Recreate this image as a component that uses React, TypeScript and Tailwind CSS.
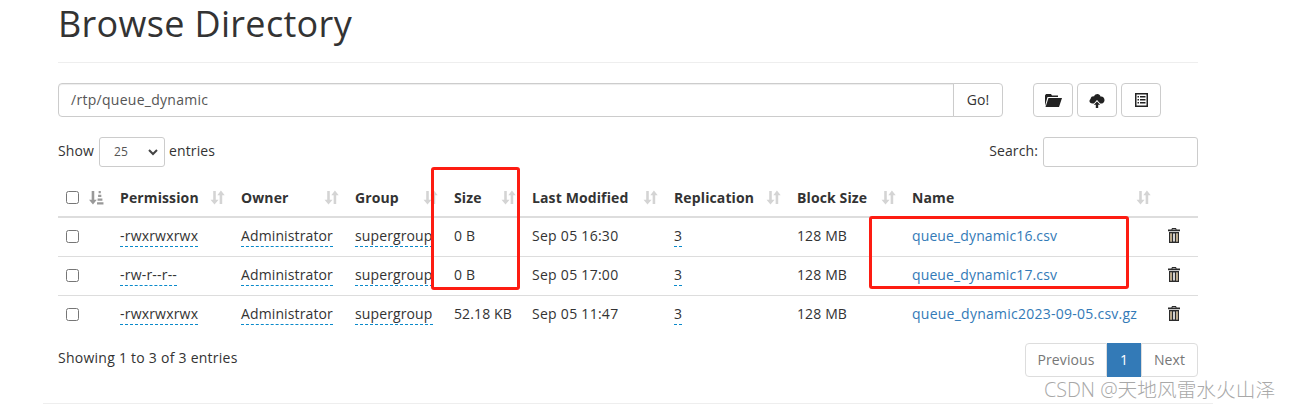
const font = { fontFamily: '"Open Sans", "Noto Sans CJK SC", sans-serif' };

const columns = [
  { label: "Permission", width: "w-[121px]" },
  { label: "Owner", width: "w-[114px]" },
  { label: "Group", width: "w-[99px]" },
  { label: "Size", width: "w-[78px]" },
  { label: "Last Modified", width: "w-[142px]" },
  { label: "Replication", width: "w-[123px]" },
  { label: "Block Size", width: "w-[115px]" },
  { label: "Name", width: "w-[255px]" },
];

const files = [
  { perm: "-rwxrwxrwx", size: "0 B", date: "Sep 05 16:30", name: "queue_dynamic16.csv" },
  { perm: "-rw-r--r--", size: "0 B", date: "Sep 05 17:00", name: "queue_dynamic17.csv" },
  { perm: "-rwxrwxrwx", size: "52.18 KB", date: "Sep 05 11:47", name: "queue_dynamic2023-09-05.csv.gz" },
];

function SortIcon() {
  return (
    <svg width="15" height="15" viewBox="0 0 14 14" className="text-[#d4d4d4]" fill="currentColor">
      <path d="M3 1h2.400v8H8l-3.800 4.500L.5 9H3z" />
      <path d="M9 13V5H6.800L10.200.5 13.700 5H11.400v8z" />
    </svg>
  );
}

function SortActiveIcon() {
  return (
    <svg width="15" height="15" viewBox="0 0 14 14" className="text-[#999]" fill="currentColor">
      <path d="M2.500 1h2.400v8h2.400l-3.600 4.500L0 9h2.500z" />
      <path d="M9 1h2v2H9zM8.500 4.500h3v2h-3zM8 8h4.500v2H8zM7.500 11.500h6v2h-6z" />
    </svg>
  );
}

function TrashIcon() {
  return (
    <svg width="14" height="15" viewBox="0 0 14 15" fill="#2b2b2b">
      <path d="M5 0h4l.6 1.600H13v1.600H1V1.600h3.400zM5.600.9l-.2.700h3.200l-.2-.7z" />
      <path fillRule="evenodd" d="M2 4h10v11H2zM3.300 5.500v8h1.500v-8zM6.200 5.500v8h1.600v-8zM9.200 5.500v8h1.500v-8z" />
      <path d="M3.300 5.500h1.500v8H3.300zM9.200 5.500h1.500v8H9.200z" fill="#b9a27a" />
    </svg>
  );
}

function Checkbox() {
  return <span className="block h-[13px] w-[13px] rounded-[2.500px] border border-[#767676] bg-white" />;
}

function Dotted({ children }: { children: string }) {
  return <span className="border-b border-dashed border-[#0a8acb] pb-px">{children}</span>;
}

export default function App() {
  return (
    <div className="relative h-[409px] w-[1291px] overflow-hidden bg-white text-[14px] tracking-[0.12px] text-[#333]" style={font}>
      <div className="ml-[43px] w-[1170px] border-b border-[#eee] px-[15px] pb-[26px]">
        <div className="h-[63px] border-b border-[#eee]">
          <h1 className="text-[36px] leading-[48px] tracking-[0.32px] text-[#333]">Browse Directory</h1>
        </div>

        <div className="mt-5 flex h-[34px] items-center">
          <div className="flex h-[34px] w-[945px]">
            <div className="flex flex-1 items-center rounded-l border border-[#ccc] px-3 pb-[2px] tracking-[0.28px] text-[#555] shadow-[inset_0_1px_1px_rgba(0,0,0,0.075)]">
              /rtp/queue_dynamic
            </div>
            <div className="-ml-px flex w-[50px] items-center justify-center rounded-r border border-[#ccc] pb-[2px]">Go!</div>
          </div>
          <div className="ml-[30px] flex gap-1">
            <div className="flex h-[34px] w-10 items-center justify-center rounded border border-[#ccc]">
              <svg width="18" height="13" viewBox="0 0 18 13" fill="#222">
                <path d="M2 0h5l1 1.500h6V3H3.500L1 12V1.500z" />
                <path d="M4.500 4H18l-3 9H1.500z" />
              </svg>
            </div>
            <div className="flex h-[34px] w-10 items-center justify-center rounded border border-[#ccc]">
              <svg width="16" height="15" viewBox="0 0 16 15" fill="#222">
                <path d="M5 10.500H3.500C.5 10.500-.5 7.500 1.500 6 2 3.500 4 3 5 3.500 6.500 0 11 .5 11.500 3.500c3-.5 5 2.500 3.500 5.500-.4.800-1.500 1.500-2.500 1.500H11L8 7z" />
                <path d="M8 7.500l4.500 4.800H9.800V15H6.200v-2.700H3.500z" fill="#fff" />
                <path d="M8 8.500l3.200 3.300H9.200V15H6.800v-3.200H4.800z" />
              </svg>
            </div>
            <div className="flex h-[34px] w-10 items-center justify-center rounded border border-[#ccc]">
              <svg width="13" height="14" viewBox="0 0 13 14" fill="#222">
                <path fillRule="evenodd" d="M0 0h13v14H0zM1.500 1.500v11h10v-11z" />
                <path d="M2.500 3h1.500v1.500H2.500zM5 3h5.500v1.500H5zM2.500 6h1.500v1.500H2.500zM5 6h5.500v1.500H5zM2.500 9h1.500v1.500H2.500zM5 9h5.500v1.500H5z" />
              </svg>
            </div>
          </div>
        </div>

        <div className="mt-5 flex h-[30px] items-center justify-between">
          <div className="flex items-center">
            <span className="pb-1">Show</span>
            <div className="mr-1 ml-[5px] flex h-[30px] w-[66px] items-center justify-between rounded-[3px] border border-[#ccc] pr-[6px] pl-[14px] text-[12px] text-[#555]">
              25
              <svg width="10" height="7" viewBox="0 0 10 7" fill="none" stroke="#444" strokeWidth="2">
                <path d="M1 1l4 4 4-4" />
              </svg>
            </div>
            <span className="pb-1">entries</span>
          </div>
          <div className="flex items-center">
            <span className="pb-1">Search:</span>
            <div className="ml-[5px] h-[30px] w-[155px] rounded-[3px] border border-[#ccc]" />
          </div>
        </div>

        <table className="mt-[13px] w-[1140px] table-fixed border-collapse">
          <thead>
            <tr className="h-[37px] border-b-2 border-[#ddd] font-bold">
              <th className="w-[54px] p-0 pb-[2px] pl-2">
                <div className="flex items-center gap-[10px]">
                  <Checkbox />
                  <SortActiveIcon />
                </div>
              </th>
              {columns.map((col) => (
                <th key={col.label} className={`${col.width} px-2 py-0 pb-[2px] text-left font-bold`}>
                  <div className="flex items-center justify-between">
                    <span>{col.label}</span>
                    <SortIcon />
                  </div>
                </th>
              ))}
              <th className="p-0" />
            </tr>
          </thead>
          <tbody>
            {files.map((file, i) => (
              <tr key={file.name} className={`h-[39px] ${i < 2 ? "border-b border-[#ddd]" : ""}`}>
                <td className="p-0 pl-2">
                  <Checkbox />
                </td>
                <td className="px-2 py-0 pb-[2px] tracking-[0.2px]"><Dotted>{file.perm}</Dotted></td>
                <td className="px-2 py-0 pb-[2px]"><Dotted>Administrator</Dotted></td>
                <td className="px-2 py-0 pb-[2px] whitespace-nowrap"><Dotted>supergroup</Dotted></td>
                <td className="px-2 py-0 pb-[2px]">{file.size}</td>
                <td className="px-2 py-0 pb-[2px] tracking-[0.28px]">{file.date}</td>
                <td className="px-2 py-0 pb-[2px]"><Dotted>3</Dotted></td>
                <td className="px-2 py-0 pb-[2px]">128 MB</td>
                <td className={`px-2 py-0 pb-[2px] whitespace-nowrap text-[#337ab7] ${i === 2 ? "tracking-[0.25px]" : ""}`}>{file.name}</td>
                <td className="p-0 pb-[2px] pl-2"><TrashIcon /></td>
              </tr>
            ))}
          </tbody>
        </table>

        <div className="mt-[9px] flex items-start justify-between">
          <div className="pt-1 tracking-[0.25px]">Showing 1 to 3 of 3 entries</div>
          <div className="flex h-[34px]">
            <div className="flex w-[82px] items-center justify-center rounded-l border border-[#ddd] pb-[2px] text-[#777]">Previous</div>
            <div className="flex w-[34px] items-center justify-center bg-[#337ab7] pb-[2px] text-white">1</div>
            <div className="flex w-[57px] items-center justify-center rounded-r border border-[#ddd] pb-[2px] text-[#777]">Next</div>
          </div>
        </div>
      </div>

      <div className="absolute top-[167px] left-[431px] h-[123px] w-[89px] rounded-[3px] border-[3px] border-[#fd1c12]" />
      <div className="absolute top-[216px] left-[869px] h-[73px] w-[260px] rounded-[3px] border-[3px] border-[#fd1c12]" />
      <div className="absolute top-[376px] left-[1044px] text-[19.7px] leading-7 font-light tracking-normal text-[#a8a8a8]">CSDN @天地风雷水火山泽</div>
    </div>
  );
}
